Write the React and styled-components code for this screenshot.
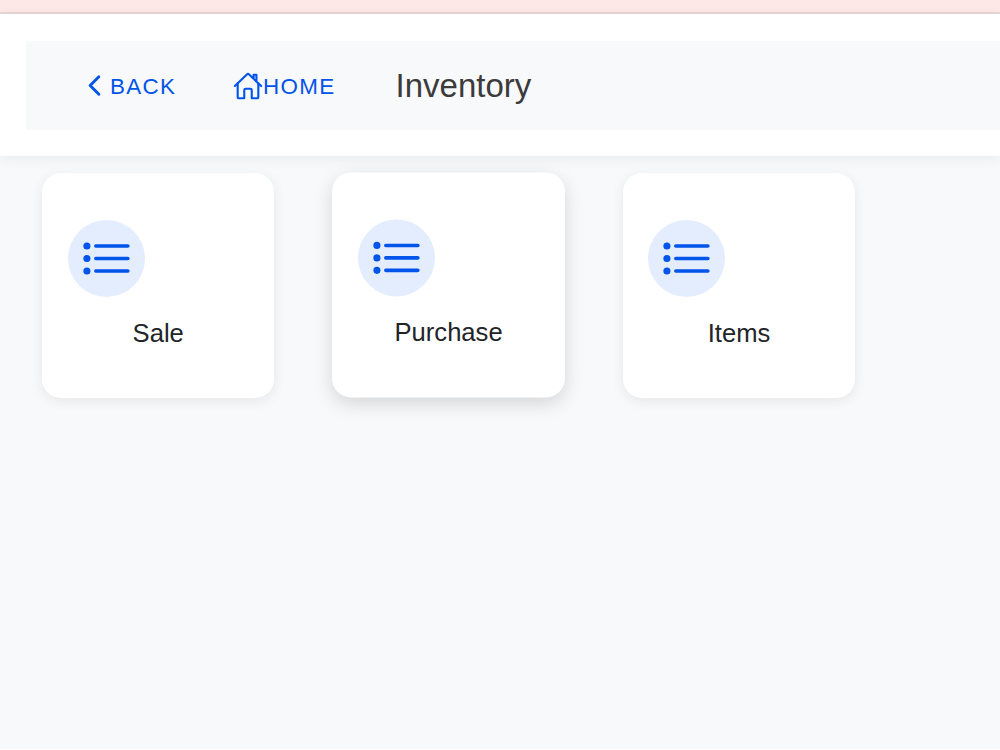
import styled, { createGlobalStyle } from "styled-components";
import { IoChevronBack, IoHomeOutline, IoListOutline } from "react-icons/io5";

const menuItems = [
  { id: "sale", label: "Sale" },
  { id: "purchase", label: "Purchase", raised: true },
  { id: "items", label: "Items" },
];

const App = () => {
  return (
    <>
      <GlobalStyle />
      <Page>
        <StatusStrip />
        <Header>
          <Toolbar>
            <BackButton type="button">
              <IoChevronBack size={31} />
              BACK
            </BackButton>
            <HomeButton type="button">
              <HomeIcon size={30} />
              HOME
            </HomeButton>
            <Title>Inventory</Title>
          </Toolbar>
        </Header>
        <CardRow>
          {menuItems.map((item) => (
            <Card key={item.id} $raised={item.raised}>
              <IconCircle>
                <IoListOutline size={57} />
              </IconCircle>
              <CardLabel>{item.label}</CardLabel>
            </Card>
          ))}
        </CardRow>
      </Page>
    </>
  );
};

export default App;

// Styling
const GlobalStyle = createGlobalStyle`
  * {
    box-sizing: border-box;
  }
  body {
    margin: 0;
    background: #ffffff;
    font-family: "Liberation Sans", Arial, sans-serif;
    overflow: hidden;
  }
`;
const Page = styled.div`
  display: flex;
  flex-direction: column;
  height: 749px;
  background: #f8f9fb;
`;
const StatusStrip = styled.div`
  flex: none;
  height: 14px;
  background: #fde8e7;
  border-bottom: 2px solid #e8d6d6;
`;
const Header = styled.header`
  flex: none;
  height: 142px;
  padding: 27px 0 26px 25.6px;
  background: #ffffff;
  box-shadow: 0 3px 13px rgba(0, 0, 0, 0.06);
`;
const Toolbar = styled.div`
  display: flex;
  align-items: center;
  height: 89px;
  padding-left: 53.4px;
  background: #f8f9fb;
`;
const ToolbarButton = styled.button`
  display: flex;
  align-items: center;
  padding: 3px 0 0;
  border: none;
  background: none;
  color: #0054e9;
  font-family: inherit;
  font-size: 22.4px;
  letter-spacing: 0.06em;
  line-height: 30px;

  svg {
    margin-top: -3px;
  }
`;
const BackButton = styled(ToolbarButton)`
  width: 154px;
`;
const HomeButton = styled(ToolbarButton)`
  width: 162.6px;
`;
const HomeIcon = styled(IoHomeOutline)`
  path {
    stroke-width: 36px;
  }
`;
const Title = styled.h1`
  margin: 0;
  color: #3b3b3b;
  font-size: 33px;
  font-weight: 400;
  line-height: 40px;
`;
const CardRow = styled.main`
  display: flex;
  gap: 58px;
  padding: 17px 42px;
`;
const Card = styled.section`
  display: flex;
  flex-direction: column;
  width: 232.4px;
  height: 224.5px;
  padding: 47px 25.6px 0;
  border-radius: 19px;
  background: #ffffff;
  box-shadow: ${({ $raised }) =>
    $raised
      ? "0 6px 19px rgba(0, 0, 0, 0.14)"
      : "0 3px 13px rgba(0, 0, 0, 0.08)"};
  transform: translateY(${({ $raised }) => ($raised ? "-0.6px" : "0")});
`;
const IconCircle = styled.div`
  display: flex;
  align-items: center;
  justify-content: center;
  width: 77px;
  height: 77px;
  border-radius: 50%;
  background: #e4edfd;
  color: #0054e9;
`;
const CardLabel = styled.span`
  margin-top: 21px;
  color: #222428;
  font-size: 25.6px;
  line-height: 30px;
  text-align: center;
`;
